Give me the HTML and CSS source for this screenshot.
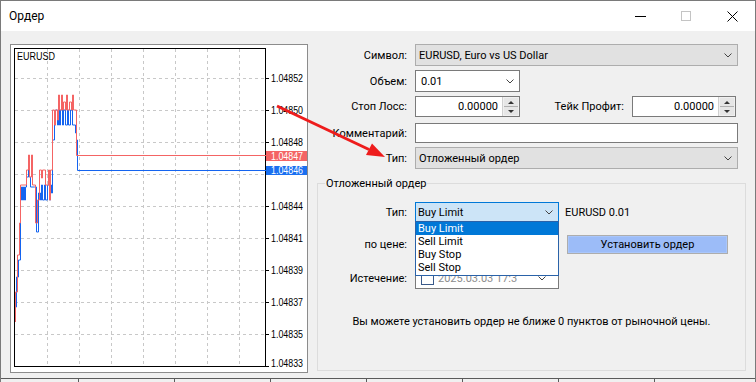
FILE: index.html
```html
<!DOCTYPE html>
<html lang="ru">
<head>
<meta charset="utf-8">
<title>Ордер</title>
<link rel="stylesheet" href="styles.css">
</head>
<body>
<div class="window">
  <div class="titlebar">
    <span class="title">Ордер</span>
    <div class="caption-btns">
      <span class="cbtn"><svg width="11" height="10" viewBox="0 0 11 10"><path d="M0 5.5H11" stroke="#000" stroke-width="1"/></svg></span>
      <span class="cbtn"><svg width="10" height="10" viewBox="0 0 10 10"><rect x="0.5" y="0.5" width="9" height="9" fill="none" stroke="#c4c4c4"/></svg></span>
      <span class="cbtn"><svg width="11" height="11" viewBox="0 0 11 11"><path d="M0.5 0.5L10.5 10.5M10.5 0.5L0.5 10.5" stroke="#000" stroke-width="1"/></svg></span>
    </div>
  </div>

  <div class="content">
    <div class="chart">
      <svg width="296" height="327" viewBox="11 45 296 327" font-family="'Liberation Sans', Arial, sans-serif" font-size="10">
        <g stroke="#c8c8c8" stroke-dasharray="3 3" stroke-width="1">
          <path d="M47.5 49V366M79.5 49V366M111.5 49V366M143.5 49V366M175.5 49V366M207.5 49V366M239.5 49V366"/>
          <path d="M15 78.5H265M15 110.5H265M15 142.5H265M15 174.5H265M15 206.5H265M15 238.5H265M15 270.5H265M15 302.5H265M15 334.5H265"/>
        </g>
        <rect x="14.5" y="48.5" width="251" height="318" fill="none" stroke="#000"/>
        <path d="M266 78.5H269M266 110.5H269M266 142.5H269M266 174.5H269M266 206.5H269M266 238.5H269M266 270.5H269M266 302.5H269M266 334.5H269M266 366.5H269" stroke="#000"/>
        <g fill="#000">
          <text x="17" y="59.5" textLength="38" lengthAdjust="spacingAndGlyphs">EURUSD</text>
          <text x="271" y="82" textLength="32" lengthAdjust="spacingAndGlyphs">1.04852</text>
          <text x="271" y="114" textLength="32" lengthAdjust="spacingAndGlyphs">1.04850</text>
          <text x="271" y="146" textLength="32" lengthAdjust="spacingAndGlyphs">1.04848</text>
          <text x="271" y="210" textLength="32" lengthAdjust="spacingAndGlyphs">1.04844</text>
          <text x="271" y="242" textLength="32" lengthAdjust="spacingAndGlyphs">1.04841</text>
          <text x="271" y="274" textLength="32" lengthAdjust="spacingAndGlyphs">1.04839</text>
          <text x="271" y="306" textLength="32" lengthAdjust="spacingAndGlyphs">1.04837</text>
          <text x="271" y="338" textLength="32" lengthAdjust="spacingAndGlyphs">1.04835</text>
          <text x="271" y="367" textLength="32" lengthAdjust="spacingAndGlyphs">1.04833</text>
        </g>
        <path fill="none" stroke="#1464f0" stroke-width="1" d="M15.5 322V307H16.5V277H18.5V260H20.5V200H21.5V187H22.5V200H23.5V187H24.5V200H25.5V187H26.5V177H28.5V170H29.5V177H30.5V187H34.5V187H36.5V232H38.5V193H40.5V200H41.5V185H42.5V200H44.5V185H45.5V200H47.5V185H49.5V200H50.5V185H51.5V193H52.5V140H54.5V125H55.5V110H57.5V125H58.5V110H59.5V125H60.5V110H62.5V125H63.5V110H65.5V125H67.5V110H68.5V125H70.5V110H72.5V125H75.5V133H76.5V140H77.5V170.5H266"/>
        <path fill="none" stroke="#f46464" stroke-width="1" d="M15.5 322V292H17.5V255H19.5V223H20.5V185H26.5V170H28.5V155H29.5V177H31.5V155H32.5V185H35.5V223H37.5V200H39.5V170H41.5V178H42.5V170H45.5V185H48.5V170H49.5V200H50.5V170H52.5V110H54.5V125H55.5V110H57.5V120H58.5V95H59.5V110H61.5V95H62.5V110H63.5V102H65.5V110H66.5V95H67.5V110H69.5V102H71.5V110H72.5V95H73.5V110H76.5V155.5H266"/>
        <rect x="266" y="151" width="41" height="10" fill="#f46464"/>
        <text x="271" y="159.5" fill="#fff" textLength="32" lengthAdjust="spacingAndGlyphs">1.04847</text>
        <rect x="266" y="166" width="41" height="9" fill="#1a6ff0"/>
        <text x="271" y="174" fill="#fff" textLength="32" lengthAdjust="spacingAndGlyphs">1.04846</text>
      </svg>
    </div>

    <div class="form">
      <div class="row r-symbol">
        <span class="lbl">Символ:</span>
        <div class="combo combo-gray w-wide h22">
          <span>EURUSD, Euro vs US Dollar</span>
          <svg class="chev" width="8" height="5" viewBox="0 0 8 5"><polyline points="0.5,0.5 4,4 7.5,0.5" fill="none" stroke="#444"/></svg>
        </div>
      </div>
      <div class="row r-volume">
        <span class="lbl">Объем:</span>
        <div class="combo combo-white w-small h22">
          <span>0.01</span>
          <svg class="chev" width="8" height="5" viewBox="0 0 8 5"><polyline points="0.5,0.5 4,4 7.5,0.5" fill="none" stroke="#444"/></svg>
        </div>
      </div>
      <div class="row r-stops">
        <span class="lbl">Стоп Лосс:</span>
        <div class="spin w-small">
          <span class="val">0.00000</span>
          <span class="arrows"><span class="up"></span><span class="down"></span></span>
        </div>
        <span class="lbl2">Тейк Профит:</span>
        <div class="spin w-tp">
          <span class="val">0.00000</span>
          <span class="arrows"><span class="up"></span><span class="down"></span></span>
        </div>
      </div>
      <div class="row r-comment">
        <span class="lbl">Комментарий:</span>
        <div class="textbox w-wide"></div>
      </div>
      <div class="row r-type">
        <span class="lbl">Тип:</span>
        <div class="combo combo-gray w-wide h22">
          <span>Отложенный ордер</span>
          <svg class="chev" width="8" height="5" viewBox="0 0 8 5"><polyline points="0.5,0.5 4,4 7.5,0.5" fill="none" stroke="#444"/></svg>
        </div>
      </div>

      <div class="group">
        <span class="gtitle">Отложенный ордер</span>
        <div class="grow g-type">
          <span class="glbl">Тип:</span>
          <div class="combo combo-focus w-mid h20">
            <span>Buy Limit</span>
            <svg class="chev" width="8" height="5" viewBox="0 0 8 5"><polyline points="0.5,0.5 4,4 7.5,0.5" fill="none" stroke="#444"/></svg>
          </div>
          <span class="info">EURUSD 0.01</span>
        </div>
        <div class="grow g-price">
          <span class="glbl">по цене:</span>
          <div class="textbox w-mid h21"></div>
          <div class="btn">Установить ордер</div>
        </div>
        <div class="grow g-exp">
          <span class="glbl">Истечение:</span>
          <div class="datebox w-mid">
            <span class="check"></span>
            <span class="date">2025.03.03 17:3</span>
            <svg class="chev" width="8" height="5" viewBox="0 0 8 5"><polyline points="0.5,0.5 4,4 7.5,0.5" fill="none" stroke="#444"/></svg>
          </div>
        </div>
        <div class="note">Вы можете установить ордер не ближе 0 пунктов от рыночной цены.</div>
      </div>
    </div>
  </div>

  <div class="bottom-strip"></div>

  <ul class="dropdown">
    <li class="sel">Buy Limit</li>
    <li>Sell Limit</li>
    <li>Buy Stop</li>
    <li>Sell Stop</li>
  </ul>

  <svg class="arrow" width="756" height="382" viewBox="0 0 756 382">
    <line x1="277" y1="106" x2="369" y2="149.5" stroke="#ee1c1c" stroke-width="3"/>
    <polygon points="385,157 366,155 372,143.5" fill="#ee1c1c"/>
  </svg>
</div>
</body>
</html>
```

FILE: styles.css
```css
* { box-sizing: border-box; }
html, body { margin: 0; padding: 0; }
body {
  width: 756px;
  height: 382px;
  overflow: hidden;
  background: #f0f0f0;
  font-family: Roboto, "Noto Sans", sans-serif;
  font-size: 11px;
  color: #000;
}
.window {
  position: relative;
  width: 756px;
  height: 382px;
  border: 1px solid #7a7a7a;
  border-bottom: none;
  background: #f0f0f0;
  display: flex;
  flex-direction: column;
}
.titlebar {
  flex: none;
  height: 30px;
  background: #fff;
  display: flex;
  align-items: center;
}
.title { flex: 1; padding-left: 8px; font-size: 12px; }
.caption-btns { display: flex; }
.cbtn {
  width: 46px;
  height: 30px;
  display: flex;
  align-items: center;
  justify-content: center;
}
.cbtn svg { display: block; }

.content {
  flex: none;
  display: flex;
  padding: 13px 0 0 9px;
}
.chart {
  flex: none;
  width: 298px;
  height: 329px;
  border: 1px solid #8c8c8c;
  background: #fff;
}
.chart svg { display: block; }

.form {
  display: flex;
  flex-direction: column;
}
.row { display: flex; align-items: center; }
.r-volume { margin-top: 4px; }
.r-stops { margin-top: 4px; }
.r-comment { margin-top: 6px; }
.r-type { margin-top: 4px; }
.lbl {
  width: 99px;
  margin-right: 8px;
  text-align: right;
  white-space: nowrap;
}
.lbl2 {
  width: 104px;
  margin-right: 8px;
  text-align: right;
  white-space: nowrap;
}
.w-wide { width: 323px; }
.w-small { width: 105px; }
.w-tp { width: 104px; }
.w-mid { width: 144px; }
.h22 { height: 22px; }
.h21 { height: 21px; }
.h20 { height: 20px; }

.combo {
  display: flex;
  align-items: center;
  justify-content: space-between;
  padding: 0 5px 0 3px;
  white-space: nowrap;
}
.combo-gray { background: #e1e1e1; border: 1px solid #adadad; }
.combo-white { background: #fff; border: 1px solid #7a7a7a; padding-left: 5px; }
.combo-focus { background: #cce4f7; border: 1px solid #0078d7; padding-left: 2px; }
.chev { display: block; flex: none; }

.spin {
  display: flex;
  height: 21px;
  border: 1px solid #7a7a7a;
  background: #fff;
}
.spin .val {
  flex: 1;
  text-align: right;
  padding-right: 4px;
  line-height: 19px;
}
.spin .arrows {
  width: 17px;
  display: flex;
  flex-direction: column;
  border-left: 1px solid #d0d0d0;
  background: #f0f0f0;
  padding: 1px;
}
.spin .up, .spin .down {
  flex: 1;
  display: flex;
  align-items: center;
  justify-content: center;
  background: #e6e6e6;
}
.spin .up { border-bottom: 1px solid #b0b0b0; }
.spin .up::before {
  content: "";
  border-left: 3px solid transparent;
  border-right: 3px solid transparent;
  border-bottom: 3px solid #333;
}
.spin .down::before {
  content: "";
  border-left: 3px solid transparent;
  border-right: 3px solid transparent;
  border-top: 3px solid #333;
}

.textbox {
  height: 20px;
  background: #fff;
  border: 1px solid #7a7a7a;
}

.group {
  margin: 14px 0 0 9px;
  width: 429px;
  height: 188px;
  border: 1px solid #dcdcdc;
  display: flex;
  flex-direction: column;
}
.gtitle {
  align-self: flex-start;
  margin: -7px 0 0 7px;
  padding: 0 1px;
  line-height: 14px;
  background: #f0f0f0;
}
.grow { display: flex; align-items: center; }
.g-type { margin-top: 11px; }
.g-price { margin-top: 12px; }
.g-exp { margin-top: 13px; }
.glbl {
  width: 89px;
  margin-right: 8px;
  text-align: right;
  white-space: nowrap;
}
.info { margin-left: 6px; }
.btn {
  margin-left: 8px;
  width: 161px;
  height: 19px;
  border: 1px solid #adadad;
  background: #9cbcf8;
  box-shadow: inset 0 0 0 1px #a9c6fb;
  display: flex;
  align-items: center;
  justify-content: center;
}
.datebox {
  height: 22px;
  background: #fff;
  border: 1px solid #7a7a7a;
  display: flex;
  align-items: center;
  padding: 0 12px 0 5px;
}
.check {
  flex: none;
  width: 13px;
  height: 13px;
  border: 1px solid #3a5a8a;
  background: #fff;
}
.date {
  flex: 1;
  margin-left: 4px;
  color: #8c8c8c;
  overflow: hidden;
  white-space: nowrap;
}
.note {
  margin-top: 25px;
  line-height: 16px;
  text-align: center;
  white-space: nowrap;
}

.bottom-strip {
  flex: 1;
  margin-top: 5px;
  border-top: 1px solid #5a5a5a;
  background-image: repeating-linear-gradient(90deg, transparent 0 95px, #5a5a5a 95px 96px);
  background-position: -18px 0;
}

.dropdown {
  position: absolute;
  left: 414px;
  top: 220px;
  width: 144px;
  height: 55px;
  margin: 0;
  padding: 0;
  list-style: none;
  background: #fff;
  border: 1px solid #2a62a8;
}
.dropdown li {
  height: 13px;
  line-height: 13px;
  padding-left: 2px;
  white-space: nowrap;
}
.dropdown li.sel { background: #0078d7; color: #fff; }

.arrow {
  position: absolute;
  left: -1px;
  top: -1px;
  pointer-events: none;
}
```
